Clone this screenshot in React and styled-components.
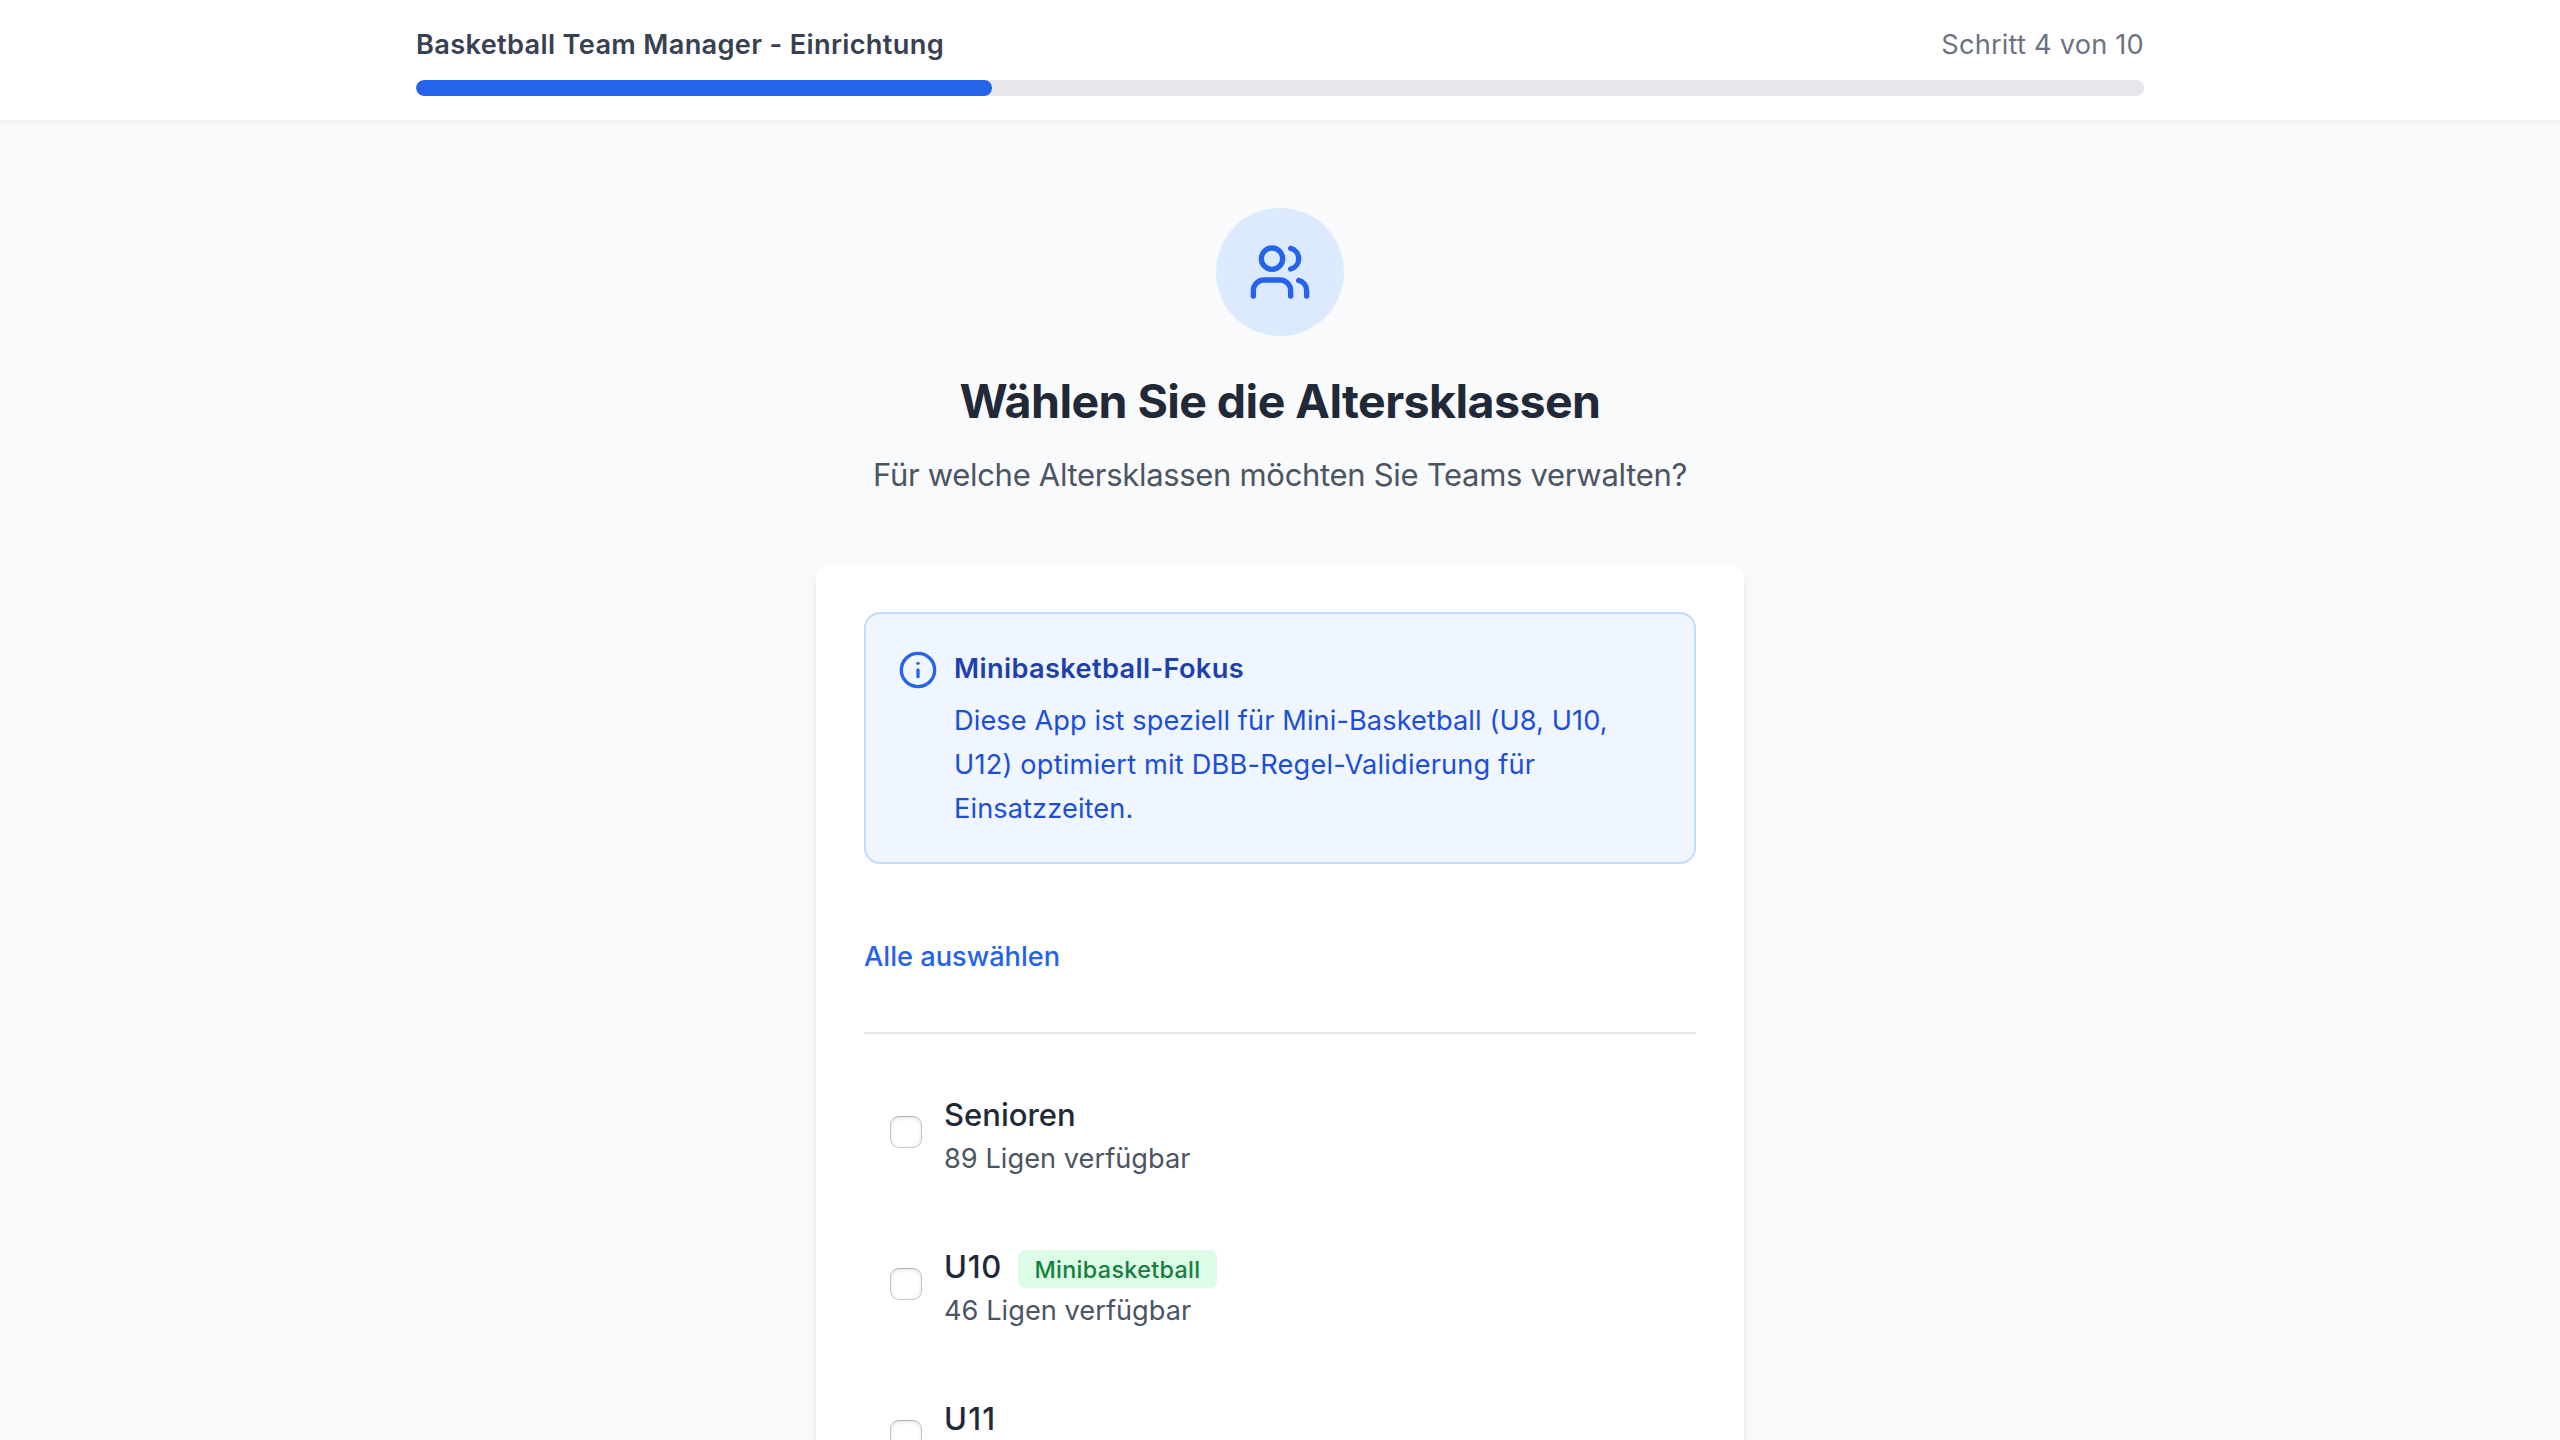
import React from "react";
import styled, { createGlobalStyle } from "styled-components";

const GlobalStyle = createGlobalStyle`
  *, *::before, *::after { box-sizing: border-box; }
  body {
    margin: 0;
    background: #f9fafb;
    font-family: "Inter", "Liberation Sans", sans-serif;
    color: #1f2937;
    overflow: hidden;
  }
  h1, h2, p { margin: 0; }
`;

const Page = styled.div`
  display: flex;
  flex-direction: column;
  height: 100vh;
  overflow: hidden;
  background: #f9fafb;
`;

const Header = styled.header`
  flex: none;
  padding: 24px 0;
  background: #fff;
  box-shadow: 0 2px 4px rgba(0, 0, 0, 0.05);
`;

const HeaderInner = styled.div`
  width: 1728px;
  margin: 0 auto;
  display: grid;
  gap: 14px;
`;

const HeaderRow = styled.div`
  display: flex;
  justify-content: space-between;
  font-size: 27.2px;
  line-height: 42px;
`;

const AppName = styled.h2`
  font-size: inherit;
  font-weight: 600;
  letter-spacing: 0.325px;
  color: #374151;
`;

const StepCount = styled.span`
  letter-spacing: 0.22px;
  color: #6b7280;
`;

const ProgressTrack = styled.div`
  height: 16px;
  border-radius: 8px;
  background: #e5e7eb;
  overflow: hidden;
`;

const ProgressBar = styled.div`
  width: ${(p) => p.$percent}%;
  height: 100%;
  border-radius: 8px;
  background: #2563eb;
`;

const Main = styled.main`
  display: flex;
  flex-direction: column;
  align-items: center;
  padding-top: 88px;
`;

const IconCircle = styled.div`
  display: grid;
  place-items: center;
  width: 128px;
  height: 128px;
  margin-bottom: 32px;
  border-radius: 50%;
  background: #dbeafe;
  color: #2563eb;
`;

const Title = styled.h1`
  margin-bottom: 16px;
  font-size: 46.5px;
  line-height: 66px;
  font-weight: 700;
  letter-spacing: -0.566px;
`;

const Subtitle = styled.p`
  margin-bottom: 64px;
  font-size: 31px;
  line-height: 50px;
  letter-spacing: -0.311px;
  color: #4b5563;
`;

const Card = styled.section`
  flex: none;
  width: 928px;
  padding: 48px;
  border-radius: 16px;
  background: #fff;
  box-shadow: 0 8px 12px -2px rgba(0, 0, 0, 0.1), 0 4px 8px -4px rgba(0, 0, 0, 0.1);
`;

const InfoBox = styled.div`
  display: flex;
  gap: 16px;
  padding: 32px 32px 31px;
  border: 2px solid #bfdbfe;
  border-radius: 16px;
  background: #eff6ff;
`;

const InfoIconSlot = styled.div`
  flex: none;
  height: 40px;
  margin-top: 4px;
  color: #2563eb;
`;

const InfoContent = styled.div`
  display: grid;
  gap: 8px;
  margin-top: 1px;
  font-size: 27.2px;
  line-height: 44px;
`;

const InfoTitle = styled.p`
  font-weight: 600;
  letter-spacing: 0.36px;
  color: #1e40af;
`;

const InfoText = styled.p`
  width: 680px;
  color: #1d4ed8;
`;

const Tracked = styled.span`
  letter-spacing: ${(p) => p.$tracking}px;
`;

const SelectBar = styled.div`
  display: flex;
  margin-top: 48px;
  padding: 25px 0 55px;
  height: 122px;
  border-bottom: 2px solid #e5e7eb;
`;

const LinkButton = styled.button`
  padding: 0;
  border: 0;
  background: none;
  font-family: inherit;
  font-size: 27.2px;
  line-height: 40px;
  font-weight: 500;
  color: #2563eb;
`;

const ClassList = styled.div`
  display: grid;
  gap: 16px;
  margin-top: 32px;
`;

const ClassRow = styled.label`
  display: flex;
  gap: 22px;
  height: 136px;
  padding: 26px 24px 22px 26px;
`;

const Checkbox = styled.input`
  appearance: none;
  flex: none;
  width: 32px;
  height: 32px;
  margin: 24px 0 0;
  border: 1px solid #c6c6c6;
  border-top-color: #b4b4b4;
  border-radius: 9px;
  background: #fff;
  box-shadow: inset 0 1px 4px rgba(0, 0, 0, 0.12);
`;

const ClassHead = styled.div`
  display: flex;
  gap: 16px;
  height: 46px;
  font-size: 31px;
  line-height: 46px;
  font-weight: 500;
`;

const Badge = styled.span`
  height: 38px;
  margin-top: 6px;
  padding: 0 16.5px;
  border-radius: 8px;
  background: #dcfce7;
  font-size: 23.3px;
  line-height: 40px;
  letter-spacing: 0.347px;
  color: #15803d;
`;

const LeagueCount = styled.p`
  font-size: 27.2px;
  line-height: 42px;
  letter-spacing: 0.03px;
  color: #4b5563;
`;

const stroke = {
  fill: "none",
  stroke: "currentColor",
  strokeWidth: 2,
  strokeLinecap: "round",
  strokeLinejoin: "round",
};

const UsersIcon = () => (
  <svg width="64" height="64" viewBox="0 0 24 24" {...stroke}>
    <path d="M16 21v-2a4 4 0 0 0-4-4H6a4 4 0 0 0-4 4v2" />
    <circle cx="9" cy="7" r="4" />
    <path d="M22 21v-2a4 4 0 0 0-3-3.87" />
    <path d="M16 3.13a4 4 0 0 1 0 7.75" />
  </svg>
);

const InfoIcon = () => (
  <svg width="40" height="40" viewBox="0 0 24 24" {...stroke}>
    <circle cx="12" cy="12" r="10" />
    <path d="M12 16v-4" />
    <path d="M12 8h.01" />
  </svg>
);

const ageClasses = [
  { name: "Senioren", leagues: 89, tracking: 0 },
  { name: "U10", leagues: 46, tracking: 0.7, mini: true },
  { name: "U11", tracking: 1.2 },
];

export default function App() {
  return (
    <Page>
      <GlobalStyle />
      <Header>
        <HeaderInner>
          <HeaderRow>
            <AppName>Basketball Team Manager - Einrichtung</AppName>
            <StepCount>Schritt 4 von 10</StepCount>
          </HeaderRow>
          <ProgressTrack>
            <ProgressBar $percent={33.33} />
          </ProgressTrack>
        </HeaderInner>
      </Header>
      <Main>
        <IconCircle>
          <UsersIcon />
        </IconCircle>
        <Title>Wählen Sie die Altersklassen</Title>
        <Subtitle>Für welche Altersklassen möchten Sie Teams verwalten?</Subtitle>
        <Card>
          <InfoBox>
            <InfoIconSlot>
              <InfoIcon />
            </InfoIconSlot>
            <InfoContent>
              <InfoTitle>Minibasketball-Fokus</InfoTitle>
              <InfoText>
                <Tracked $tracking={0.09}>
                  Diese App ist speziell für Mini-Basketball (U8, U10,
                </Tracked>{" "}
                <Tracked $tracking={0.185}>U12) optimiert mit DBB-Regel-Validierung für</Tracked>{" "}
                <Tracked $tracking={0.1}>Einsatzzeiten.</Tracked>
              </InfoText>
            </InfoContent>
          </InfoBox>
          <SelectBar>
            <LinkButton>Alle auswählen</LinkButton>
          </SelectBar>
          <ClassList>
            {ageClasses.map((c) => (
              <ClassRow key={c.name}>
                <Checkbox type="checkbox" />
                <div>
                  <ClassHead>
                    <Tracked $tracking={c.tracking}>{c.name}</Tracked>
                    {c.mini && <Badge>Minibasketball</Badge>}
                  </ClassHead>
                  {c.leagues && <LeagueCount>{c.leagues} Ligen verfügbar</LeagueCount>}
                </div>
              </ClassRow>
            ))}
          </ClassList>
        </Card>
      </Main>
    </Page>
  );
}
